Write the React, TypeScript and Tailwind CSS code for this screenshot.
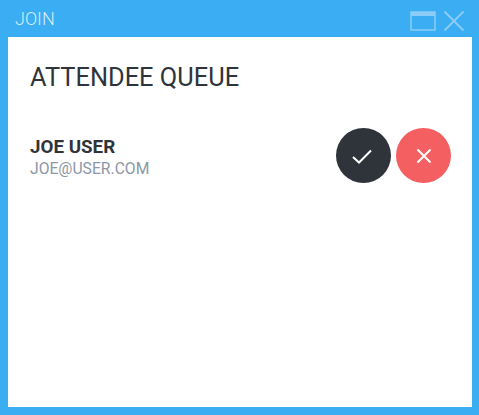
export default function App() {
  return (
    <div className="flex h-[415px] w-[479px] flex-col bg-[#3badf2] pr-[7px] pb-[8px] pl-2 font-['Roboto',sans-serif]">
      {/* title bar */}
      <div className="flex h-[37px] shrink-0 items-center justify-between">
        <span className="pl-[7px] text-[18px] font-light text-[#d6ecfb]">JOIN</span>
        <div className="flex items-center gap-[7px] pt-[5px] pr-[7px]">
          <svg width="26" height="20" viewBox="0 0 26 20" fill="none" className="text-[#8ccdf7]">
            <rect x="1" y="1" width="24" height="18" stroke="currentColor" strokeWidth="1.5" />
            <rect x="1" y="1" width="24" height="4" fill="currentColor" />
          </svg>
          <svg width="22" height="22" viewBox="0 0 22 22" fill="none" className="text-[#8ccdf7]">
            <path d="M1.5 1.5 L20.5 20.5 M20.5 1.5 L1.5 20.5" stroke="currentColor" strokeWidth="1.8" />
          </svg>
        </div>
      </div>

      {/* queue panel */}
      <div className="flex-1 bg-white pt-[24px] pr-[21px] pl-[22px]">
        <h1 className="text-[25.4px] leading-[32px] font-normal text-[#2f343b]">ATTENDEE QUEUE</h1>
        <div className="mt-[35px] flex items-center justify-between">
          <div className="pt-[4px]">
            <div className="text-[18.8px] leading-[22px] font-bold text-[#2f343b]">JOE USER</div>
            <div className="text-[15.7px] leading-[22px] text-[#8c97a6]">JOE@USER.COM</div>
          </div>
          <div className="flex gap-[5px]">
            <button className="flex h-[55px] w-[55px] items-center justify-center rounded-full bg-[#2f343b]">
              <svg width="24" height="24" viewBox="0 0 24 24" fill="none" className="mr-[3px] mt-[1px]">
                <path d="M3 13 L9 18.5 L21 6.5" stroke="white" strokeWidth="2" />
              </svg>
            </button>
            <button className="flex h-[55px] w-[55px] items-center justify-center rounded-full bg-[#f45f61]">
              <svg width="16" height="16" viewBox="0 0 16 16" fill="none">
                <path d="M1.5 1.5 L14.5 14.5 M14.5 1.5 L1.5 14.5" stroke="white" strokeWidth="2" />
              </svg>
            </button>
          </div>
        </div>
      </div>
    </div>
  );
}
